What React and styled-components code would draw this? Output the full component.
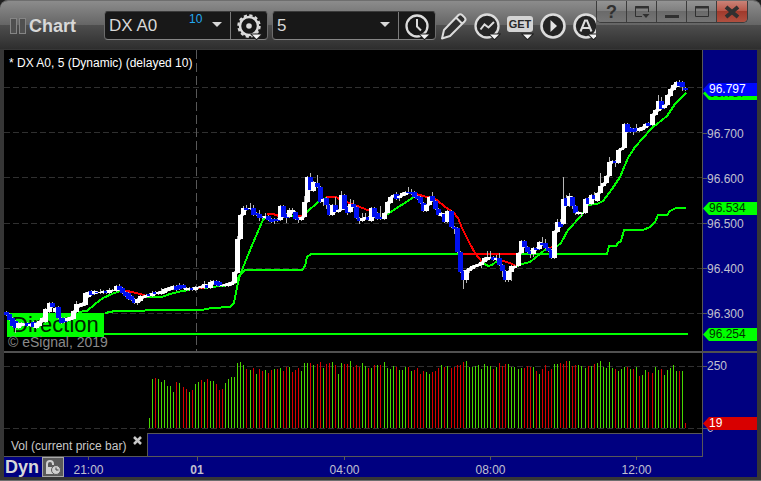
import React, { useState } from "react";
import styled, { createGlobalStyle, css } from "styled-components";

const navy = "#000080";
const line = "#585858";
const lime = "#00ff00";
const red = "#ff0000";
const iconGrey = "#d8d8d8";

const GlobalStyle = createGlobalStyle`
  * {
    box-sizing: border-box;
  }
  body {
    margin: 0;
    background: #202020;
    font-family: "Liberation Sans", Arial, sans-serif;
  }
  button, input, select {
    font-family: inherit;
    margin: 0;
    padding: 0;
    border: 0;
    border-radius: 0;
    background: none;
    outline: 0;
  }
`;

const Window = styled.div`
  min-height: 100vh;
  background: #363636;
  border-radius: 8px 8px 0 0;
  border-top: 1px solid #6e6e6e;
  border-bottom: 1px solid #6e6e6e;
  overflow: hidden;
`;

const Header = styled.header`
  display: flex;
  height: 49px;
  padding-right: 13px;
  background: linear-gradient(
    #8c8c8c 0,
    #656565 24px,
    #4e4e4e 24px,
    #2e2e2e 48px,
    #363636 48px
  );
`;

const Tools = styled.div`
  flex: 1;
  min-width: 0;
  display: flex;
  align-items: center;
  overflow: hidden;
  padding-left: 10px;
`;

const Grip = styled.span`
  flex: none;
  width: 7px;
  height: 16px;
  margin-right: 2px;
  border: 1px solid #858585;
  background: #505050;
`;

const Title = styled.h1`
  margin: 0 28px 0 1px;
  color: ${iconGrey};
  font-size: 18px;
  font-weight: 700;
  line-height: 28px;
`;

const Group = styled.div`
  position: relative;
  flex: none;
  display: flex;
  align-items: center;
  width: 164px;
  height: 29px;
  margin-right: 4px;
  border: 1px solid #6c6c6c;
  border-color: #3a3a3a #6c6c6c #858585;
  border-radius: 4px;
  background: #181818;
`;

const fieldText = css`
  color: ${iconGrey};
  font-size: 17px;
  line-height: 27px;
  height: 27px;
  padding-left: 4px;
`;

const SymbolInput = styled.input`
  ${fieldText}
  width: 84px;
`;

const Delay = styled.span`
  width: 24px;
  height: 26px;
  color: #23a8f0;
  font-size: 12px;
  line-height: 12px;
`;

const IntervalSelect = styled.select`
  ${fieldText}
  appearance: none;
  width: 126px;
  option {
    color: #000;
  }
`;

const Arrow = styled.svg`
  position: absolute;
  left: 107px;
  top: 10px;
  width: 10px;
  height: 6px;
  pointer-events: none;
  fill: ${iconGrey};
`;

const GroupButton = styled.button`
  display: flex;
  align-items: center;
  justify-content: center;
  width: 37px;
  height: 27px;
  margin-left: auto;
  border-left: 1px solid #7a7a7a;
`;

const ToolButton = styled.button`
  flex: none;
  display: flex;
  width: 28px;
  height: 28px;
  margin-right: 5px;
`;

const Controls = styled.div`
  flex: none;
  display: flex;
  height: 22px;
  border: solid #3c3c3c;
  border-width: 0 1px 1px;
  border-radius: 0 0 5px 5px;
  overflow: hidden;
`;

const ControlButton = styled.button`
  display: flex;
  align-items: center;
  justify-content: center;
  width: 30px;
  border-right: 1px solid #3c3c3c;
  background: ${(props) =>
    props.$close
      ? "linear-gradient(#c98378, #b85446 50%, #a03a2c 50%, #b05040)"
      : "linear-gradient(#949494, #7e7e7e 50%, #6a6a6a 50%, #757575)"};
  color: #303030;
  font-size: 18px;
  font-weight: 700;
  line-height: 20px;
  &:last-child {
    border-right: 0;
  }
`;

const Body = styled.main`
  display: grid;
  grid-template-columns: 1fr 54px;
  margin: 0 4px 3px;
`;

const Pane = styled.section`
  position: relative;
  min-width: 0;
  height: ${(props) => props.$height}px;
  background: #000;
  border-right: 1px solid ${line};
`;

const Plot = styled.svg`
  display: block;
  width: 100%;
  height: 100%;
  shape-rendering: crispEdges;
`;

const Caption = styled.p`
  position: absolute;
  left: 5px;
  top: 5px;
  margin: 0;
  color: #fff;
  font-size: 12px;
  line-height: 16px;
`;

const Copyright = styled.p`
  position: absolute;
  left: 4px;
  bottom: 1px;
  margin: 0;
  color: #8a8a8a;
  font-size: 14px;
  line-height: 16px;
`;

const Axis = styled.div`
  position: relative;
  grid-row: span ${(props) => props.$rows || 1};
  display: flex;
  flex-direction: column;
  gap: ${(props) => props.$gap || 0}px;
  background: ${navy};
  color: #c0c0d0;
  font-size: 12px;
  padding-top: ${(props) => props.$top || 0}px;
`;

const Tick = styled.div`
  flex: none;
  display: flex;
  align-items: center;
  height: ${(props) => props.$step}px;
  &::before {
    content: "";
    width: 4px;
    height: 1px;
    background: ${line};
  }
`;

const Tag = styled.div`
  position: absolute;
  left: 0;
  right: 0;
  height: 13px;
  padding-left: 6px;
  background: ${(props) => props.$bg};
  color: ${(props) => props.$color};
  font-size: 12px;
  line-height: 13px;
  clip-path: polygon(0 50%, 6px 0, 100% 0, 100% 100%, 6px 100%);
`;

const Divider = styled.div`
  grid-column: 1 / -1;
  height: 2px;
  background: #505050;
`;

const Legend = styled.div`
  display: flex;
  height: 24px;
  background: #000;
  border-right: 1px solid ${line};
  border-bottom: 1px solid ${line};
`;

const LegendLabel = styled.div`
  display: flex;
  width: 143px;
  padding-left: 7px;
  color: #c8c8c8;
  font-size: 12px;
  line-height: 26px;
`;

const LegendClose = styled.button`
  display: flex;
  width: 9px;
  height: 9px;
  margin: 3px 0 0 7px;
`;

const Strip = styled.div`
  flex: 1;
  background: ${navy};
  border: solid ${line};
  border-width: 1px 0 0 1px;
`;

const TimeBar = styled.footer`
  grid-column: 1 / -1;
  display: flex;
  height: 20px;
  padding-right: 57px;
  background: ${navy};
`;

const Dyn = styled.span`
  width: 38px;
  padding-left: 1px;
  color: ${iconGrey};
  font-size: 18px;
  font-weight: 700;
  line-height: 20px;
`;

const LockButton = styled.button`
  display: flex;
  width: 22px;
  height: 20px;
  border: 1px solid #a8a8a8;
  background: #5a5a5a;
`;

const Times = styled.div`
  flex: 1;
  display: grid;
  grid-template-columns: 49fr 168fr 127fr 165fr 127fr;
`;

const Time = styled.span`
  display: flex;
  flex-direction: column;
  align-items: center;
  color: #c0c0d0;
  font-size: 12px;
  font-weight: ${(props) => (props.$strong ? 700 : 400)};
  line-height: 16px;
  &::before {
    content: "";
    width: 1px;
    height: ${(props) => (props.$strong ? 4 : 3)}px;
    margin-bottom: ${(props) => (props.$strong ? 1 : 2)}px;
    background: ${line};
  }
`;

// bars are 67px / 22 apart, the last one sits at x = 685
const LAST_X = 685;
const PITCH = 67 / 22;
const barX = (i, count) => Math.floor(LAST_X + 0.5 - (count - 1 - i) * PITCH);

// [open, close, high, low] on the pane scale
const CANDLES = [
  [312, 315], [314, 320], [318, 326], [321, 328, 0, 333], [328, 323], [326, 323],
  [325, 324], [323, 326], [326, 324], [322, 327], [328, 323], [326, 321],
  [322, 318], [322, 309], [312, 303], [303, 307, 302], [312, 308], [307, 318],
  [318, 323], [318, 322], [321, 318], [320, 317], [319, 311], [312, 304, 301],
  [307, 304], [306, 303], [305, 293], [297, 292], [291, 295, 290], [294, 291],
  [292, 293], [293, 292, 289], [293, 291], [291, 293], [293, 290, 288], [291, 290],
  [291, 286], [286, 290, 284], [288, 293], [292, 296], [293, 299], [296, 300],
  [299, 303], [303, 299, 0, 305], [301, 296], [298, 296], [297, 295], [294, 296],
  [296, 293, 291], [292, 294], [294, 292], [294, 291, 288], [293, 289], [291, 288],
  [290, 287], [289, 286], [286, 290], [285, 289, 283], [285, 288], [290, 288],
  [290, 288], [288, 290], [290, 287], [288, 287], [288, 286], [288, 284, 281],
  [285, 288], [288, 282, 280], [284, 281], [281, 285], [282, 286], [286, 285],
  [286, 284], [286, 283], [285, 282], [283, 272], [273, 239, 236], [239, 215],
  [215, 208, 206], [208, 210, 205], [209, 208, 203], [208, 215, 205], [213, 215],
  [214, 218, 210, 221], [217, 218], [218, 216, 213], [216, 220], [219, 222],
  [219, 221, 0, 224], [219, 221], [220, 206], [206, 217], [214, 218, 0, 223],
  [217, 210, 208], [213, 210, 208], [212, 219], [218, 220, 0, 223], [220, 217],
  [217, 202, 196], [202, 177], [177, 190, 173], [191, 182], [183, 187, 175],
  [187, 202], [202, 199, 0, 206], [198, 205, 0, 209], [205, 215], [215, 205],
  [205, 212, 197], [212, 210], [210, 195, 191], [195, 209], [207, 213, 0, 215],
  [212, 204, 199], [204, 207, 200], [207, 218], [218, 221, 0, 224], [221, 218, 213],
  [219, 217, 213], [217, 220], [221, 208], [208, 217], [213, 219], [217, 219, 206],
  [219, 213], [213, 202], [203, 197], [197, 195], [194, 199, 192], [198, 196, 0, 201],
  [196, 193], [195, 192], [192, 193, 187], [192, 194, 189], [192, 197], [196, 199],
  [197, 203], [203, 211], [211, 205], [205, 197], [196, 201, 192], [201, 209],
  [209, 215], [216, 213], [214, 222], [222, 211], [211, 227], [227, 229, 0, 234],
  [228, 252], [252, 272], [271, 280, 0, 289], [280, 270, 0, 283], [271, 268, 0, 273],
  [269, 266], [267, 265], [266, 264], [265, 262, 0, 268], [262, 258], [260, 257, 251],
  [258, 257, 251], [257, 260], [260, 258, 255], [258, 265, 253], [265, 271, 0, 277],
  [271, 280, 0, 282], [280, 271, 0, 282], [272, 266, 0, 281], [268, 266], [266, 253],
  [253, 241], [241, 247], [247, 252], [251, 254, 0, 258], [254, 248, 0, 257],
  [248, 250], [249, 242], [243, 245, 237], [243, 248, 239], [248, 251],
  [250, 258, 0, 259], [258, 231], [232, 222, 219], [222, 227, 219], [224, 199, 177],
  [198, 206, 195], [206, 196, 193], [197, 206, 0, 209], [206, 213, 0, 215],
  [214, 212], [214, 213, 0, 217], [213, 199], [198, 204], [204, 195], [195, 199, 192],
  [201, 193], [193, 186, 173], [186, 183], [183, 176], [176, 162, 157], [163, 161],
  [161, 163, 0, 167], [163, 150], [150, 148], [148, 124], [124, 132, 123], [128, 132],
  [129, 132, 0, 135], [128, 131, 124], [131, 128], [130, 127], [128, 124], [123, 126],
  [125, 114], [115, 110], [111, 101, 95], [101, 109, 97], [108, 105], [105, 95],
  [96, 89], [90, 85], [87, 82], [82, 86, 80], [82, 87, 0, 91], [88, 90],
];

// g = up bar, r = down bar, followed by its height
const VOLUMES = `g10 g49 r50 g49 g46 g48 g42 g42 g36 r46 g45 r41 r39 g36 r38 g44 g46 r48 g46 r49
g47 g47 r44 r38 r39 g45 g49 g51 g51 g65 g66 g63 r59 g58 r60 g54 r59 r57 g58 r55 r58 g59 r59 g60
r57 r61 g61 r56 r58 r60 g57 g65 g65 r65 g63 r64 r66 g60 r64 r65 g66 r63 g54 g65 r64 r64 g67 r61
r63 r61 g65 g62 r60 g60 r63 g63 r63 g66 g60 g59 g62 r61 g58 g58 g61 r61 g57 r58 r60 r54 r57 g56
g54 r56 r57 r60 g63 r61 g62 r60 r61 r63 r63 r66 g67 g61 g61 g62 g63 g59 g64 g62 g62 r59 g61 r65
r62 r64 g64 g61 g61 g59 g60 r60 r62 r61 g61 r57 g54 r59 r63 r57 r59 g64 g64 r65 r64 r67 g67 r62
r63 g63 g62 g60 r62 g62 r64 g65 g67 g61 g60 g66 g60 r59 g57 g59 g61 r61 g59 r59 g61 r52 g53 g58
r56 r55 g61 g58 r59 g53 g58 g60 g63 g57 r57 g57 r5`.split(/\s+/);

const LINES = [
  // slow average
  [lime, "105,313 115,311 176,310 201,310 212,308 230,307 234,303 237,287 240,275 245,270 302,270 305,266 307,257 311,254 462,254"],
  [red, "462,254 516,254"],
  [lime, "516,254 607,254 609,246 616,246 618,243 621,241 624,230 643,230 650,227 655,222 658,215 667,215 670,211 676,208 686,208"],
  // direction
  [lime, "104,334 688,334"],
  // fast average
  [lime, "78,312 87,311 95,304 103,298 112,294 120,291"],
  [red, "122,290 132,292 140,294 147,296"],
  [lime, "147,297 162,297 170,294 182,291 190,290"],
  [red, "190,289 204,288"],
  [lime, "204,288 220,286 230,285 235,283 240,275 248,255 256,236 262,222 265,217"],
  [red, "267,214 273,214 279,216"],
  [lime, "279,217 295,216"],
  [red, "295,216 303,216"],
  [lime, "306,213 318,202 326,198"],
  [red, "326,197 336,197 341,200 360,207 370,211"],
  [lime, "386,215 400,206 414,197"],
  [red, "416,194 427,197 437,200 445,207 453,212 458,218 462,228 470,244 475,253 482,262"],
  [lime, "482,262 488,266 492,265 497,261"],
  [red, "500,260 510,263 516,266"],
  [lime, "516,266 522,264 530,262 540,254 547,248"],
  [red, "547,248 556,247"],
  [lime, "556,247 561,243 568,230 582,215 588,205 597,204 603,201 612,189 620,177 628,158 635,147 652,128 667,116 675,104 686,93"],
];

const PRICE_LINES = [87, 132, 177, 223, 268, 313];
const priceTop = (price) => Math.ceil(31 + (96.8 - price) * 452);

const PRICE_TAGS = [
  { price: 96.787, bg: lime, color: "#003000" },
  { price: 96.797, bg: "#0008ff", color: "#fff" },
  { price: 96.534, bg: lime, color: "#003000" },
  { price: 96.254, bg: lime, color: "#003000" },
];

const Candle = ({ x, bar }) => {
  const [open, close, high, low] = bar;
  const top = Math.min(open, close);
  const bottom = Math.max(open, close);
  const wickTop = high || top - 1;
  return (
    <g>
      <rect x={x} y={wickTop} width="1" height={(low || bottom + 1) - wickTop} fill="#b8b8b8" />
      <rect
        x={x - 2}
        y={top}
        width="5"
        height={bottom - top}
        fill={close > open ? "#0010f0" : "#fff"}
      />
    </g>
  );
};

const PricePlot = () => (
  <Plot viewBox="4 50 698 301" preserveAspectRatio="none">
    {PRICE_LINES.map((y) => (
      <path key={y} d={`M4 ${y + 0.5}H702`} stroke="#303030" strokeDasharray="6 3" />
    ))}
    <path d="M196.5 50V351" stroke="#585858" strokeDasharray="9 4" />
    {LINES.map(([color, points]) => (
      <polyline key={points} points={points} fill="none" stroke={color} strokeWidth="2" />
    ))}
    <rect x="7" y="313" width="97" height="24" fill={lime} />
    <text x="12" y="332" fontSize="22" fill="#002000">
      Direction
    </text>
    {CANDLES.map((bar, i) => (
      <Candle key={i} x={barX(i, CANDLES.length)} bar={bar} />
    ))}
  </Plot>
);

const VolumePlot = () => (
  <Plot viewBox="4 353 698 80" preserveAspectRatio="none">
    <path d="M4 366.5H702M4 428.5H702" stroke="#303030" strokeDasharray="6 3" />
    {VOLUMES.map((item, i) => {
      const height = Number(item.slice(1));
      return (
        <rect
          key={i}
          x={barX(i, VOLUMES.length)}
          y={428 - height}
          width="1"
          height={height}
          fill={item[0] === "g" ? "#48d800" : "#d80000"}
        />
      );
    })}
  </Plot>
);

const Icon = ({ children }) => (
  <svg width="28" height="28" viewBox="0 0 28 28" fill="none" stroke="#dcdcdc" strokeWidth="2">
    {children}
  </svg>
);

const Drop = () => (
  <path d="M17 22.500h9l-4.500 4.500z" fill="#f4f4f4" stroke="#202020" strokeWidth="2" paintOrder="stroke" />
);

const GearIcon = () => (
  <Icon>
    <circle cx="14" cy="14" r="9" strokeWidth="2.500" />
    <circle cx="14" cy="14" r="10.700" strokeWidth="2" strokeDasharray="3.200 2.400" />
    <circle cx="14" cy="14" r="2.800" fill="#dcdcdc" stroke="none" />
    <Drop />
  </Icon>
);

const ClockIcon = () => (
  <Icon>
    <circle cx="14" cy="14" r="10.500" strokeWidth="2.300" />
    <path d="M14 7v7.500l4 4" />
    <Drop />
  </Icon>
);

const PencilIcon = () => (
  <Icon>
    <path
      d="M2 26.500L4 18L18.500 3q1.800-1.600 3.600 0l2.600 2.600q1.600 1.800 0 3.600L10 24zM16 5.500l6 6"
      fill="#303030"
      strokeLinejoin="round"
    />
  </Icon>
);

const StudyIcon = () => (
  <Icon>
    <circle cx="14" cy="14" r="11.500" strokeWidth="2.300" fill="#262626" />
    <path d="M7.500 17.500l4-5 4 3 5.500-5.500" />
    <Drop />
  </Icon>
);

const GetIcon = () => (
  <Icon>
    <rect x="1" y="4" width="26" height="16" rx="3" fill="#d4d4d4" stroke="none" />
    <text
      x="14"
      y="16"
      textAnchor="middle"
      fontSize="11"
      fontWeight="700"
      fill="#282828"
      stroke="none"
    >
      GET
    </text>
    <Drop />
  </Icon>
);

const PlayIcon = () => (
  <Icon>
    <circle cx="14" cy="14" r="11.500" strokeWidth="2.600" fill="#242424" />
    <path d="M11.500 8l6.500 6-6.500 6z" fill="#e4e4e4" stroke="none" />
  </Icon>
);

const AlertIcon = () => (
  <Icon>
    <circle cx="14" cy="14" r="11.500" strokeWidth="2.600" fill="#242424" />
    <path d="M8.500 19.500l4.500-11h2l4.500 11M10.500 16h7" />
    <Drop />
  </Icon>
);

const TOOLS = [
  ["Draw", PencilIcon],
  ["Studies", StudyIcon],
  ["GET", GetIcon],
  ["Play", PlayIcon],
  ["Alerts", AlertIcon],
];

const ControlIcon = ({ d, children }) => (
  <svg width="16" height="14" viewBox="0 0 16 14" fill="none" stroke="#303030">
    <path d={d} />
    {children}
  </svg>
);

const DownArrow = () => (
  <Arrow viewBox="0 0 10 6">
    <path d="M0 0h10L5 5z" />
  </Arrow>
);

const App = () => {
  const [symbol, setSymbol] = useState("DX A0");
  const [interval, setInterval] = useState("5");

  return (
    <>
      <GlobalStyle />
      <Window>
        <Header>
          <Tools>
            <Grip />
            <Grip />
            <Title>Chart</Title>
            <Group>
              <SymbolInput
                aria-label="Symbol"
                value={symbol}
                onChange={(e) => setSymbol(e.target.value)}
              />
              <Delay>10</Delay>
              <DownArrow />
              <GroupButton aria-label="Settings">
                <GearIcon />
              </GroupButton>
            </Group>
            <Group>
              <IntervalSelect
                aria-label="Interval"
                value={interval}
                onChange={(e) => setInterval(e.target.value)}
              >
                <option>5</option>
              </IntervalSelect>
              <DownArrow />
              <GroupButton aria-label="Time template">
                <ClockIcon />
              </GroupButton>
            </Group>
            {TOOLS.map(([name, ToolIcon]) => (
              <ToolButton key={name} aria-label={name}>
                <ToolIcon />
              </ToolButton>
            ))}
          </Tools>
          <Controls>
            <ControlButton>?</ControlButton>
            <ControlButton aria-label="Window menu">
              <ControlIcon d="M8 11.500H1.500V1.500h13V7">
                <path d="M1 2.500h14" strokeWidth="2" />
                <path d="M8.500 9h7L12 13z" fill="#303030" stroke="none" />
              </ControlIcon>
            </ControlButton>
            <ControlButton aria-label="Minimize">
              <ControlIcon>
                <path d="M1 11.500h14" strokeWidth="3" />
              </ControlIcon>
            </ControlButton>
            <ControlButton aria-label="Maximize">
              <ControlIcon d="M1.500 1.500h13v10h-13z">
                <path d="M1 2.500h14" strokeWidth="2" />
              </ControlIcon>
            </ControlButton>
            <ControlButton $close aria-label="Close">
              <ControlIcon>
                <path d="M2 2l12 10M14 2L2 12" strokeWidth="4" />
              </ControlIcon>
            </ControlButton>
          </Controls>
        </Header>
        <Body>
          <Pane $height={301}>
            <PricePlot />
            <Caption>* DX A0, 5 (Dynamic) (delayed 10)</Caption>
            <Copyright>© eSignal, 2019</Copyright>
          </Pane>
          <Axis $top={61}>
            {["96.700", "96.600", "96.500", "96.400", "96.300"].map((label) => (
              <Tick key={label} $step={45}>
                {label}
              </Tick>
            ))}
            {PRICE_TAGS.map(({ price, bg, color }) => (
              <Tag key={price} $bg={bg} $color={color} style={{ top: priceTop(price) }}>
                {price.toFixed(3)}
              </Tag>
            ))}
          </Axis>
          <Divider />
          <Pane $height={80}>
            <VolumePlot />
          </Pane>
          <Axis $rows={2} $gap={36}>
            <Tick $step={26}>250</Tick>
            <Tick $step={26}>0</Tick>
            <Tag $bg="#d80000" $color="#fff" style={{ top: 64 }}>
              19
            </Tag>
          </Axis>
          <Legend>
            <LegendLabel>
              Vol (current price bar)
              <LegendClose aria-label="Remove study">
                <svg width="9" height="9" viewBox="0 0 9 9" stroke="#c8c8c8" strokeWidth="2.500">
                  <path d="M1 1l7 7M8 1L1 8" />
                </svg>
              </LegendClose>
            </LegendLabel>
            <Strip />
          </Legend>
          <TimeBar>
            <Dyn>Dyn</Dyn>
            <LockButton aria-label="Time lock">
              <svg width="20" height="18" viewBox="0 0 20 18" fill="none" stroke="#d0d0d0" strokeWidth="2">
                <path d="M4 9V6a3 3 0 0 1 6 0v1" />
                <rect x="3" y="9" width="9" height="7" fill="#d0d0d0" stroke="none" />
                <circle cx="13" cy="12" r="4.500" fill="#d0d0d0" stroke="#5a5a5a" strokeWidth="1" />
                <path d="M13 9.500V12h2.500" stroke="#404040" strokeWidth="1" />
              </svg>
            </LockButton>
            <Times>
              <Time>21:00</Time>
              <Time $strong>01</Time>
              <Time>04:00</Time>
              <Time>08:00</Time>
              <Time>12:00</Time>
            </Times>
          </TimeBar>
        </Body>
      </Window>
    </>
  );
};

export default App;
